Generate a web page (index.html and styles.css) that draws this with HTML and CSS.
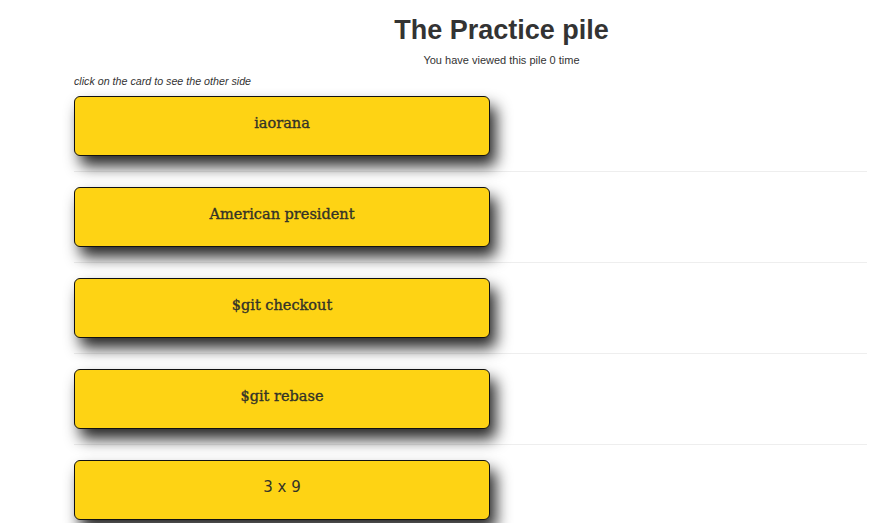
FILE: index.html
```html
<!DOCTYPE html>
<html>
<head>
<meta charset="utf-8">
<link rel="stylesheet" href="styles.css">
</head>
<body>
<div class="container">
  <h1 class="title">The Practice pile</h1>
  <p class="subtitle">You have viewed this pile 0 time</p>
  <p class="hint">click on the card to see the other side</p>
  <div class="pile">
    <div class="row"><div class="card">iaorana</div></div>
    <div class="row"><div class="card">American president</div></div>
    <div class="row"><div class="card">$git checkout</div></div>
    <div class="row"><div class="card">$git rebase</div></div>
    <div class="row"><div class="card sans">3 x 9</div></div>
  </div>
</div>
</body>
</html>
```

FILE: styles.css
```css
html, body {
  margin: 0;
  padding: 0;
  background: #fff;
  overflow: hidden;
}
body {
  font-family: "Liberation Sans", Arial, sans-serif;
  color: #333;
}
.container {
  margin-left: 74px;
}
.title {
  margin: 0;
  padding-top: 14px;
  padding-left: 60px;
  text-align: center;
  font-size: 27px;
  font-weight: bold;
  line-height: 32px;
  color: #333;
}
.subtitle {
  margin: 7px 0 0;
  padding-left: 60px;
  text-align: center;
  font-size: 11px;
  line-height: 14px;
  color: #333;
}
.hint {
  margin: 8px 0 0;
  font-size: 10.7px;
  line-height: 13px;
  font-style: italic;
  color: #333;
}
.pile {
  width: 793px;
  margin-top: 8px;
}
.row {
  padding-bottom: 15px;
  border-bottom: 1px solid #eeeeee;
  margin-bottom: 15px;
}
.card {
  box-sizing: border-box;
  width: 416px;
  height: 60px;
  border: 1px solid #111;
  border-radius: 6px;
  background: #fed314;
  box-shadow: 6px 10px 15px rgba(0, 0, 0, 0.85);
  display: flex;
  align-items: center;
  justify-content: center;
  font-family: "DejaVu Serif", "Liberation Serif", serif;
  font-size: 14.5px;
  color: #333328;
  -webkit-text-stroke: 0.35px #333328;
  padding-bottom: 6px;
}
.card.sans {
  font-family: "DejaVu Sans", sans-serif;
  font-weight: normal;
  font-size: 15px;
  -webkit-text-stroke: 0;
}
```
